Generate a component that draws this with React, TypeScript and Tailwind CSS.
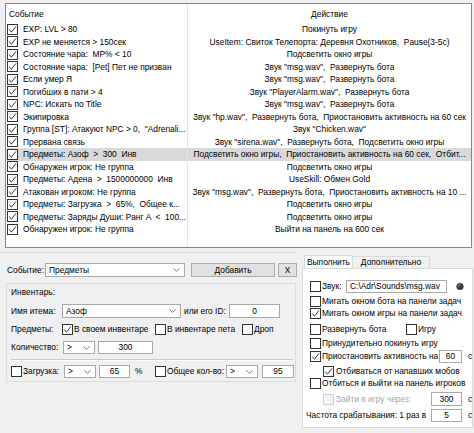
import React from "react";

const rows: [string, string][] = [
  ["EXP: LVL > 80", "Покинуть игру"],
  ["EXP не меняется > 150сек", "UseItem: Свиток Телепорта: Деревня Охотников,  Pause(3-5c)"],
  ["Состояние чара:  MP% < 10", "Подсветить окно игры"],
  ["Состояние чара:  [Pet] Пет не призван", "Звук \"msg.wav\",  Развернуть бота"],
  ["Если умер Я", "Звук \"msg.wav\",  Развернуть бота"],
  ["Погибших в пати > 4", "Звук \"PlayerAlarm.wav\",  Развернуть бота"],
  ["NPC: Искать по Title", "Звук \"msg.wav\",  Развернуть бота"],
  ["Экипировка", "Звук \"hp.wav\",  Развернуть бота,  Приостановить активность на 60 сек"],
  ["Группа [ST]: Атакуют NPC > 0,  \"Adrenali...", "Звук \"Chicken.wav\""],
  ["Прервана связь", "Звук \"sirena.wav\",  Развернуть бота,  Подсветить окно игры"],
  ["Предметы: Азоф  >  300  Инв", "Подсветить окно игры,  Приостановить активность на 60 сек,  Отбит..."],
  ["Обнаружен игрок: Не группа", "Подсветить окно игры"],
  ["Предметы: Адена  >  1500000000  Инв", "UseSkill: Обмен Gold"],
  ["Атакован игроком: Не группа", "Звук \"msg.wav\",  Развернуть бота,  Приостановить активность на 10 ..."],
  ["Предметы: Загрузка  >  65%,  Общее к...", "Подсветить окно игры"],
  ["Предметы: Заряды Души: Ранг A  <  100...", "Подсветить окно игры"],
  ["Обнаружен игрок: Не группа", "Выйти на панель на 600 сек"],
];

const Box = ({ on, dim }: { on?: boolean; dim?: boolean }) => (
  <span
    className={
      dim
        ? "w-[11px] h-[11px] shrink-0 border border-[#d0d0d0] bg-[#f4f4f4] flex items-center justify-center"
        : "w-[11px] h-[11px] shrink-0 border border-[#333333] bg-white flex items-center justify-center"
    }
  >
    {on && (
      <svg width="9" height="9" viewBox="0 0 9 9">
        <path d="M1.2 4.6 L3.4 7.2 L8 1.4" fill="none" stroke="#222" strokeWidth="0.9" />
      </svg>
    )}
  </span>
);

const Chevron = () => (
  <svg width="7" height="4" viewBox="0 0 7 4" className="shrink-0">
    <path d="M0.5 0.5 L3.5 3.3 L6.5 0.5" fill="none" stroke="#555" strokeWidth="0.8" />
  </svg>
);

const Combo = ({ className, text }: { className: string; text: string }) => (
  <div className={`${className} shrink-0 bg-white border border-[#a9a9a9] flex items-center pl-[3px] pr-[4px]`}>
    <span className="flex-1 whitespace-nowrap">{text}</span>
    <Chevron />
  </div>
);

const Field = ({ className, text }: { className: string; text: string }) => (
  <div className={`${className} shrink-0 bg-white border border-[#a9a9a9] flex items-center justify-center`}>
    {text}
  </div>
);

export default function App() {
  return (
    <div className="w-[474px] h-[433px] bg-[#f0f0f0] overflow-hidden text-[8.4px] leading-none text-black font-['Liberation_Sans',Arial,sans-serif]">
      {/* список правил */}
      <div className="pt-[3px] pl-[5px]">
        <div className="w-[467px] h-[245px] border border-[#828790] bg-white flex flex-col">
          <div className="h-[19px] flex shrink-0">
            <div className="w-[182px] border-r border-[#e5e5e5] pl-[3px] pt-[1px] flex items-center">Событие</div>
            <div className="flex-1 flex items-center justify-center pt-[1px]">Действие</div>
          </div>
          {rows.map(([ev, act], i) => (
            <div key={i} className={i === 10 ? "h-[12.5px] flex bg-[#d9d9d9]" : "h-[12.5px] flex"}>
              <div className="w-[182px] border-r border-[#e5e5e5] pl-[1px] flex items-center gap-[5px] overflow-hidden">
                <Box on />
                <span className="whitespace-pre">{ev}</span>
              </div>
              <div className="flex-1 flex items-center justify-center overflow-hidden whitespace-pre">{act}</div>
            </div>
          ))}
          <div className="flex-1 flex">
            <div className="w-[182px] border-r border-[#e5e5e5]" />
          </div>
        </div>
      </div>

      <div className="flex h-[185px]">
        {/* левая панель */}
        <div className="w-[297px] mt-[4px] border-t border-[#dadada]">
          <div className="mt-[10px] h-[14px] flex items-center pl-[7px]">
            <span className="w-[38px]">Событие:</span>
            <Combo className="w-[140px] h-[14px]" text="Предметы" />
            <div className="ml-[6px] w-[84px] h-[14px] bg-[#e1e1e1] border border-[#adadad] flex items-center justify-center">Добавить</div>
            <div className="ml-[3px] w-[19px] h-[14px] bg-[#e1e1e1] border border-[#adadad] flex items-center justify-center">X</div>
          </div>

          <div className="mt-[6px] ml-[6px] w-[290px] h-[99px] border border-[#dcdcdc] pl-[4px]">
            <div className="mt-[2px] h-[12px] flex items-center">Инвентарь:</div>
            <div className="mt-[6px] h-[14px] flex items-center">
              <span className="w-[51px]">Имя итема:</span>
              <Combo className="w-[119px] h-[14px]" text="Азоф" />
              <span className="ml-[3px] w-[45px]">или его ID:</span>
              <Field className="w-[51px] h-[14px]" text="0" />
            </div>
            <div className="mt-[5px] h-[12px] flex items-center">
              <span className="w-[51px]">Предметы:</span>
              <Box on />
              <span className="ml-[1px] w-[81px]">В своем инвентаре</span>
              <Box />
              <span className="ml-[1px] w-[75px]">В инвентаре пета</span>
              <Box />
              <span className="ml-[1px]">Дроп</span>
            </div>
            <div className="mt-[6px] h-[13px] flex items-center">
              <span className="w-[52px]">Количество:</span>
              <Combo className="w-[32px] h-[13px]" text=">" />
              <Field className="ml-[3px] w-[55px] h-[13px]" text="300" />
            </div>
            <div className="mt-[5px] w-[282px] h-[2px] border-t border-[#c8c8c8] border-b border-b-white" />
            <div className="mt-[4px] h-[13px] flex items-center">
              <Box />
              <span className="ml-[1px] w-[41px]">Загрузка:</span>
              <Combo className="w-[32px] h-[13px]" text=">" />
              <Field className="ml-[3px] w-[31px] h-[13px]" text="65" />
              <span className="ml-[5px] w-[20px]">%</span>
              <Box />
              <span className="ml-[1px] w-[59px]">Общее кол-во:</span>
              <Combo className="w-[32px] h-[13px]" text=">" />
              <Field className="ml-[4px] w-[32px] h-[13px]" text="95" />
            </div>
          </div>
        </div>

        {/* вкладки */}
        <div className="ml-[5px] w-[171px] mt-[7px] flex flex-col">
          <div className="h-[13px] flex items-end pl-[2px]">
            <div className="w-[49px] h-[13px] bg-white border border-b-0 border-[#d9d9d9] flex items-center justify-center">Выполнить</div>
            <div className="w-[77px] h-[12px] bg-[#f0f0f0] border border-l-0 border-b-0 border-[#d9d9d9] flex items-center justify-center">Дополнительно</div>
          </div>
          <div className="w-[171px] h-[160px] bg-white border border-[#d9d9d9]">
            <div className="mt-[11px] h-[12px] flex items-center pl-[7px]">
              <Box />
              <span className="ml-[1px] w-[24px]">Звук:</span>
              <div className="w-[101px] h-[13px] bg-white border border-[#a9a9a9] flex items-center pl-[3px]">C:\Adr\Sounds\msg.wav</div>
              <svg width="10" height="10" viewBox="0 0 10 10" className="ml-[8px]">
                <circle cx="5" cy="5.5" r="3.6" fill="#3c3c3c" />
                <path d="M3.4 3.2 L5 1.2 L6.6 3.2 Z" fill="#777" />
                <circle cx="4" cy="4.6" r="0.9" fill="#9a9a9a" />
              </svg>
            </div>
            <div className="mt-[3px] h-[12px] flex items-center pl-[7px] gap-[1px]">
              <Box />
              <span className="whitespace-nowrap">Мигать окном бота на панели задач</span>
            </div>
            <div className="h-[12px] flex items-center pl-[7px] gap-[1px]">
              <Box on />
              <span className="whitespace-nowrap">Мигать окном игры на панели задач</span>
            </div>
            <div className="mt-[4.5px] h-[12px] flex items-center pl-[7px]">
              <Box />
              <span className="ml-[1px] w-[84px]">Развернуть бота</span>
              <Box />
              <span className="ml-[1px]">Игру</span>
            </div>
            <div className="mt-[1.5px] h-[12px] flex items-center pl-[7px] gap-[1px]">
              <Box />
              <span className="whitespace-nowrap">Принудительно покинуть игру</span>
            </div>
            <div className="mt-[1px] h-[12px] flex items-center pl-[7px]">
              <Box on />
              <span className="ml-[1px] flex-1 whitespace-nowrap">Приостановить активность на</span>
              <Field className="w-[23px] h-[13px]" text="60" />
              <span className="w-[10px] pl-[6px]">с</span>
            </div>
            <div className="mt-[3px] h-[12px] flex items-center pl-[20px] gap-[2px]">
              <Box on />
              <span className="whitespace-nowrap">Отбиваться от напавших мобов</span>
            </div>
            <div className="h-[12px] flex items-center pl-[7px] gap-[1px]">
              <Box />
              <span className="whitespace-nowrap">Отбиться и выйти на панель игроков</span>
            </div>
            <div className="mt-[4px] h-[12px] flex items-center pl-[20px]">
              <Box dim />
              <span className="ml-[2px] flex-1 text-[#a8a8a8] whitespace-nowrap">Зайти в игру через:</span>
              <Field className="w-[31px] h-[14px]" text="300" />
              <span className="w-[10px] pl-[6px]">с</span>
            </div>
            <div className="mt-[4.5px] h-[12px] flex items-center pl-[3px]">
              <span className="flex-1 whitespace-nowrap">Частота срабатывания: 1 раз в</span>
              <Field className="w-[31px] h-[13px]" text="5" />
              <span className="w-[10px] pl-[6px]">с</span>
            </div>
          </div>
        </div>
      </div>
    </div>
  );
}
